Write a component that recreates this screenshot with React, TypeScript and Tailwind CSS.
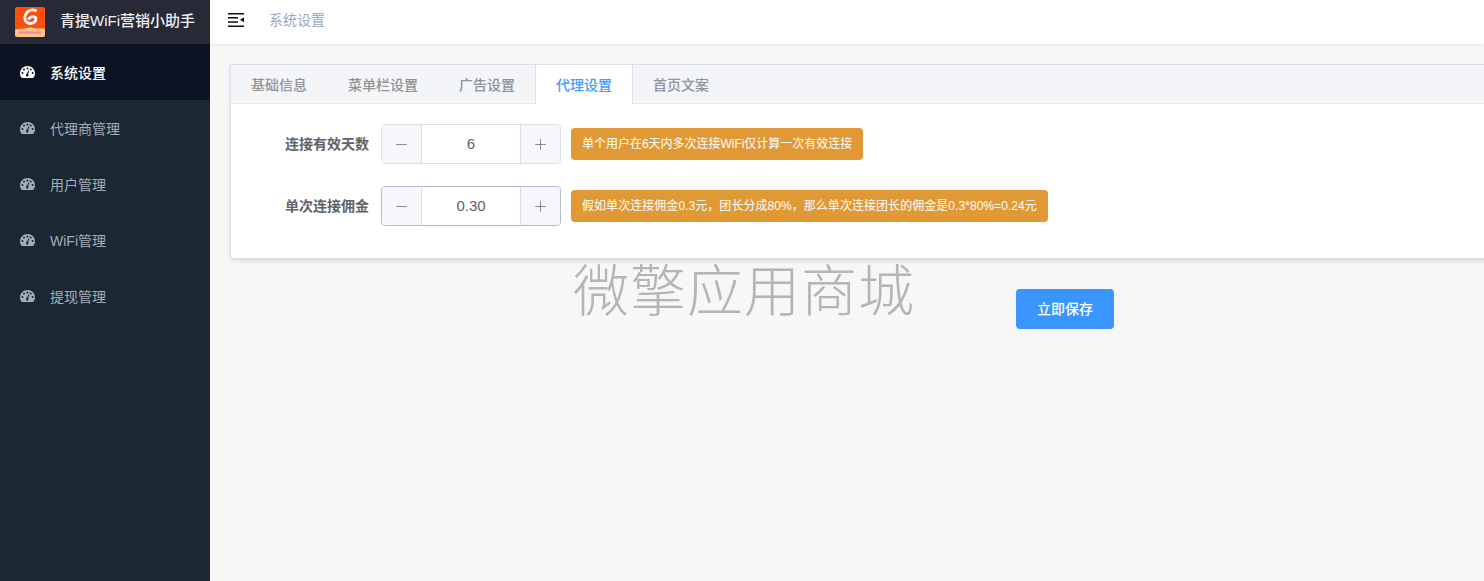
import { Minus, Plus } from 'lucide-react'

const menu = ['系统设置', '代理商管理', '用户管理', 'WiFi管理', '提现管理']
const tabs = ['基础信息', '菜单栏设置', '广告设置', '代理设置', '首页文案']

const fields = [
  {
    label: '连接有效天数',
    value: '6',
    tip: '单个用户在6天内多次连接WiFi仅计算一次有效连接',
    border: 'border-[#dcdfe6]',
    tipClass: 'tracking-[-0.02px]',
  },
  {
    label: '单次连接佣金',
    value: '0.30',
    tip: '假如单次连接佣金0.3元，团长分成80%，那么单次连接团长的佣金是0.3*80%=0.24元',
    border: 'border-[#b4bccc]',
    tipClass: 'tracking-[0.05px]',
  },
]

function GaugeIcon() {
  return (
    <svg width="15" height="12" viewBox="0 0 15 12" className="shrink-0" fill="currentColor">
      <path
        fillRule="evenodd"
        d="M7.5 0C3.4 0 0 3.2 0 7.2c0 1.6.5 3 1.4 4.3.2.3.5.5.9.5h10.400c.4 0 .7-.2.9-.5.9-1.300 1.400-2.700 1.400-4.300C15 3.200 11.600 0 7.500 0ZM2.400 7.900a1 1 0 1 1 0-2 1 1 0 0 1 0 2Zm1.600-3.300a1 1 0 1 1 0-2 1 1 0 0 1 0 2Zm3.500-1.200a1 1 0 1 1 0-2 1 1 0 0 1 0 2Zm1 6.400a1.300 1.300 0 0 1-2.500-.6c0-.5.3-.9.700-1.100l1.700-3.700.8.300-1.100 3.900c.3.300.5.800.4 1.200Zm2.200-5.200a1 1 0 1 1 0-2 1 1 0 0 1 0 2Zm1.900 3.300a1 1 0 1 1 0-2 1 1 0 0 1 0 2Z"
      />
    </svg>
  )
}

function Logo() {
  return (
    <svg width="30" height="30" viewBox="0 0 30 30" className="shrink-0">
      <rect width="30" height="30" rx="2" fill="#fb4d0b" />
      <path d="M0 23c3-1.500 5-1.200 8-1.200s5-1.500 8-1.200 4 1.200 7 .8 5-.3 7 .6v6a2 2 0 0 1-2 2H2a2 2 0 0 1-2-2Z" fill="#fbc28a" />
      <path
        d="M20.500 3.500c-2.600-1.300-6.200-.5-8.500 2-2.700 3-3 7.500-.5 9.600 2.700 2.300 7 1.600 8.800-1 1.200-1.800.7-4-1-4.300-1.800-.3-3.900.4-5.300 1.800"
        fill="none"
        stroke="#fff"
        strokeWidth="2.800"
        strokeLinecap="round"
      />
      <rect x="4" y="24.500" width="22" height="2" fill="#f08a9c" />
    </svg>
  )
}

function CollapseIcon() {
  return (
    <svg width="16" height="14" viewBox="0 0 16 14" fill="#111">
      <rect x="0" y="0" width="16" height="1.500" />
      <rect x="0" y="4" width="10" height="1.500" />
      <rect x="0" y="8.300" width="10" height="1.500" />
      <rect x="0" y="12.500" width="16" height="1.500" />
      <path d="M16 4.300v5l-4-2.500Z" />
    </svg>
  )
}

export default function App() {
  return (
    <div
      className="relative flex h-[581px] w-[1484px] overflow-hidden bg-[#f7f7f7] text-sm"
      style={{ fontFamily: '"Liberation Sans", "Noto Sans CJK SC", sans-serif' }}
    >
      <aside className="w-[210px] shrink-0 bg-[#1b2733]">
        <div className="flex h-11 items-center bg-[#272a36] pl-[15px]">
          <Logo />
          <span className="ml-[15px] pb-0.5 text-[15px] font-medium text-[#eef0f3]">青提WiFi营销小助手</span>
        </div>
        <nav>
          {menu.map((m, i) => (
            <div
              key={m}
              className={
                i === 0
                  ? 'flex h-14 items-center gap-[15px] bg-[#0c1423] pl-5 font-medium text-white'
                  : 'flex h-14 items-center gap-[15px] pl-5 text-[#a3adba]'
              }
            >
              <GaugeIcon />
              <span className="pt-0.5">{m}</span>
            </div>
          ))}
        </nav>
      </aside>

      <main className="min-w-0 flex-1">
        <header className="flex h-11 items-center rounded-bl-[5px] bg-white pb-1 pl-[18px] shadow-[0_1px_4px_rgba(0,21,41,0.08)]">
          <CollapseIcon />
          <span className="ml-[25px] text-[#97a8be]">系统设置</span>
        </header>

        <div className="pl-5 pt-5">
          <section className="h-[195px] w-[1300px] rounded-b-[4px] border border-[#dcdfe6] bg-white shadow-[0_2px_4px_rgba(0,0,0,0.12)]">
            <div className="flex h-[39px] border-b border-[#e4e7ed] bg-[#f3f5f8]">
              {tabs.map((t, i) => (
                <div
                  key={t}
                  className={
                    i === 3
                      ? 'relative -ml-px flex h-[39px] items-center border-x border-[#dcdfe6] bg-white px-5 font-medium text-[#409eff]'
                      : 'mr-px flex h-[38px] items-center px-5 pt-0.5 font-medium text-[#909399]'
                  }
                >
                  {t}
                </div>
              ))}
            </div>
            <div className="flex flex-col gap-[22px] pt-5">
              {fields.map((f) => (
                <div key={f.label} className="flex items-center">
                  <label className="w-[150px] pr-3 text-right font-bold text-[#606266]">{f.label}</label>
                  <div className={`flex h-10 w-[180px] overflow-hidden rounded-[4px] border ${f.border}`}>
                    <span className="flex w-10 items-center justify-center border-r border-[#dcdfe6] bg-[#f5f7fa] text-[#606266]">
                      <Minus size={17} strokeWidth={1} />
                    </span>
                    <span className="flex flex-1 items-center justify-center bg-white text-[15px] text-[#606266]">
                      {f.value}
                    </span>
                    <span className="flex w-10 items-center justify-center border-l border-[#dcdfe6] bg-[#f5f7fa] text-[#606266]">
                      <Plus size={17} strokeWidth={1} />
                    </span>
                  </div>
                  <span className={`ml-2.5 flex h-8 items-center rounded-[4px] bg-[#e19936] px-[11px] text-xs text-white ${f.tipClass}`}>
                    {f.tip}
                  </span>
                </div>
              ))}
            </div>
          </section>

          <div className="ml-[786px] mt-[30px]">
            <button className="h-10 w-[98px] rounded-[4px] bg-[#3a96fe] font-medium text-white">立即保存</button>
          </div>
        </div>
      </main>

      <div className="absolute left-[573px] top-[257px] text-[56px] font-light leading-[70px] tracking-[1px] text-[#b5b5b5]">
        微擎应用商城
      </div>
    </div>
  )
}
